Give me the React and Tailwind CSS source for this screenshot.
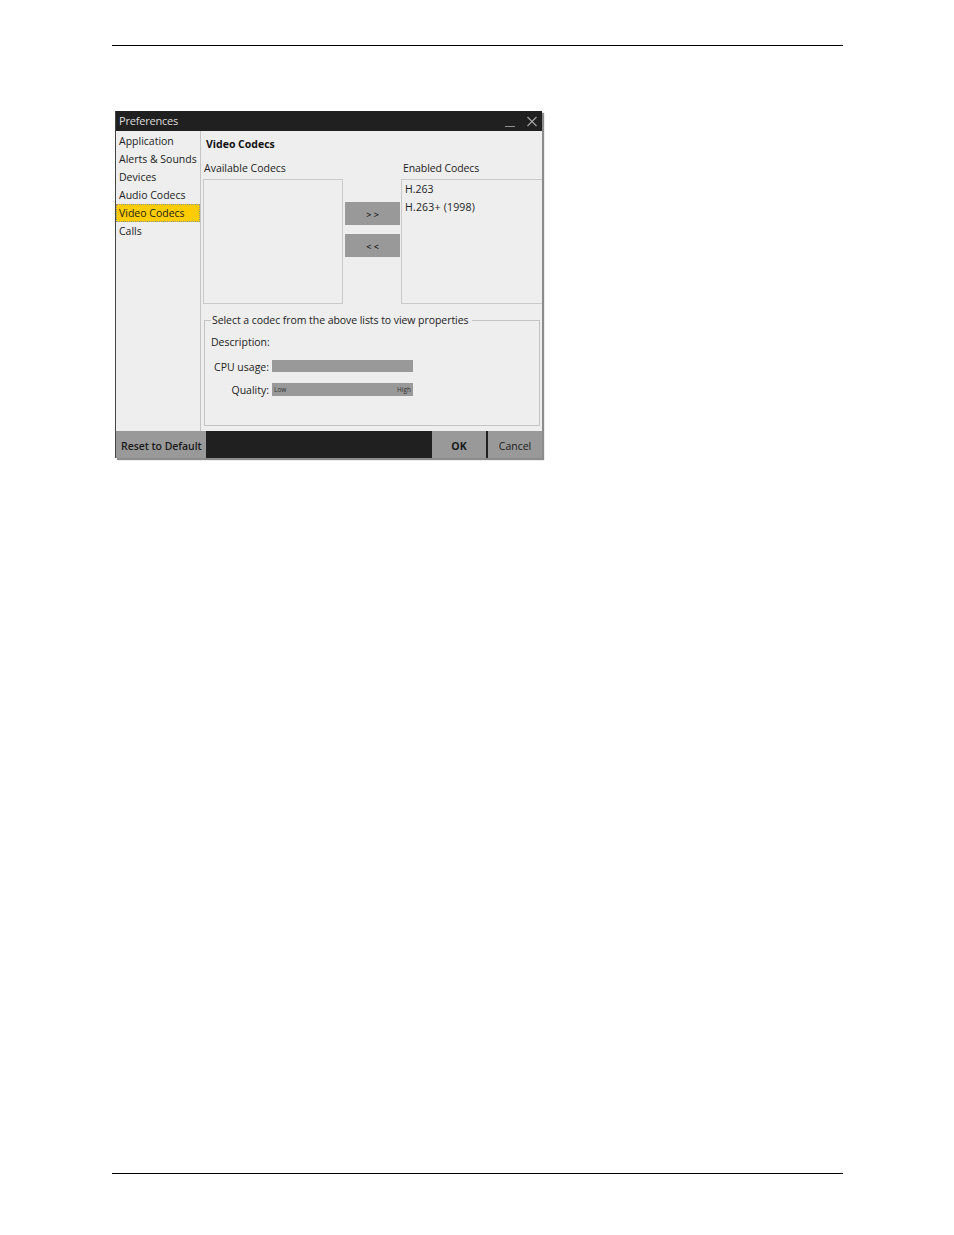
const SideItem = ({ label, active = false }) => {
    return (
        <div className={`h-[18px] leading-[18px] w-[84px] pl-[3px] ${active ? "bg-[#ffcc00] outline-1 -outline-offset-1 outline-dotted outline-[#8f8f8f]" : ""}`}>
            {label}
        </div>
    );
}

const Sidebar = () => {
    return (
        <div className="w-[85px] shrink-0 border-r border-[#c4c4c4] pt-px text-[10.5px] text-[#222]">
            <SideItem label="Application" />
            <SideItem label="Alerts & Sounds" />
            <SideItem label="Devices" />
            <SideItem label="Audio Codecs" />
            <SideItem label="Video Codecs" active />
            <SideItem label="Calls" />
        </div>
    );
}

const MoveButton = ({ label }) => {
    return (
        <div className="w-[55px] h-[23px] pt-[3px] bg-[#999999] flex items-center justify-center text-[9px] font-semibold text-[#111]">
            {label}
        </div>
    );
}

const Codecs = () => {
    return (
        <div className="flex pl-[2px]">
            <div className="w-[140px]">
                <div className="h-[14px] leading-[14px] pl-px">Available Codecs</div>
                <div className="mt-[4px] h-[125px] border border-[#cacaca]"></div>
            </div>
            <div className="w-[58px] pl-[2px] pt-[41px] flex flex-col gap-[9px]">
                <MoveButton label="> >" />
                <MoveButton label="< <" />
            </div>
            <div className="w-[141px]">
                <div className="h-[14px] leading-[14px] pl-[2px] tracking-[-0.1px]">Enabled Codecs</div>
                <div className="mt-[4px] h-[125px] border border-r-0 border-[#cacaca] pl-[3px]">
                    <div className="h-[18px] leading-[18px]">H.263</div>
                    <div className="h-[18px] leading-[18px] tracking-[0.2px]">H.263+ (1998)</div>
                </div>
            </div>
        </div>
    );
}

const Meter = ({ children }) => {
    return (
        <div className="w-[141px] bg-[#999999] flex items-center justify-between px-[2px] text-[6.5px] text-[#333]">
            {children}
        </div>
    );
}

const Properties = () => {
    return (
        <fieldset className="ml-[3px] mt-[9px] w-[336px] h-[113px] border border-[#c4c4c4] pl-[6px]">
            <legend className="ml-0 px-px leading-[14px] tracking-[-0.06px]">Select a codec from the above lists to view properties&nbsp;</legend>
            <div className="h-[14px] leading-[14px] mt-[8px]">Description:</div>
            <div className="flex mt-[11px] h-[12px]">
                <div className="w-[61px] text-right pr-[3px] leading-[14px]">CPU usage:</div>
                <Meter />
            </div>
            <div className="flex mt-[11px] h-[13px]">
                <div className="w-[61px] text-right pr-[3px] leading-[14px]">Quality:</div>
                <Meter>
                    <span>Low</span>
                    <span>High</span>
                </Meter>
            </div>
        </fieldset>
    );
}

const Footer = () => {
    return (
        <div className="h-[27px] bg-[#202020] flex justify-between text-[10.5px] font-semibold text-[#1a1a1a]">
            <div className="w-[90px] pt-[4px] bg-[#999999] flex items-center pl-[5px] whitespace-nowrap tracking-[-0.05px]">Reset to Default</div>
            <div className="flex gap-[2px]">
                <div className="w-[54px] pt-[4px] bg-[#999999] flex items-center justify-center font-bold">OK</div>
                <div className="w-[54px] pt-[4px] bg-[#999999] flex items-center justify-center font-normal">Cancel</div>
            </div>
        </div>
    );
}

const Preferences = () => {
    return (
        <div className="w-[427px] h-[347px] ml-[115px] mt-[65px] bg-[#eeeeee] border-l border-[#444] shadow-[2px_2px_1px_#8c8c8c] flex flex-col">
            <div className="h-[20px] shrink-0 bg-[#202020] flex items-center justify-between pl-[3px] pr-[5px] text-[11px] tracking-[-0.2px] text-[#dddddd]">
                <span className="pt-px">Preferences</span>
                <div className="flex items-center gap-[12px]">
                    <svg width="10" height="11" viewBox="0 0 10 11" fill="none" stroke="#8f8f8f" strokeWidth="1">
                        <path d="M0 10.5h10" />
                    </svg>
                    <svg width="10" height="11" viewBox="0 0 10 11" fill="none" stroke="#a8a8a8" strokeWidth="1.1">
                        <path d="M.5 1l9 9M9.5 1l-9 9" />
                    </svg>
                </div>
            </div>
            <div className="flex-1 flex text-[10.5px] text-[#222]">
                <Sidebar />
                <div className="flex-1">
                    <div className="h-[24px] pt-[6px] pl-[5px] leading-[14px] font-bold text-[#111]">Video Codecs</div>
                    <div className="mt-[6px]">
                        <Codecs />
                        <Properties />
                    </div>
                </div>
            </div>
            <Footer />
        </div>
    );
}

const App = () => {
    return (
        <div className="w-[954px] h-[1235px] bg-white flex flex-col justify-between font-['Open_Sans',sans-serif] overflow-hidden">
            <div className="pt-[45px]">
                <div className="ml-[112px] w-[731px] h-px bg-black"></div>
                <Preferences />
            </div>
            <div className="ml-[112px] w-[731px] h-px bg-black mb-[61px]"></div>
        </div>
    );
}

export default App;
